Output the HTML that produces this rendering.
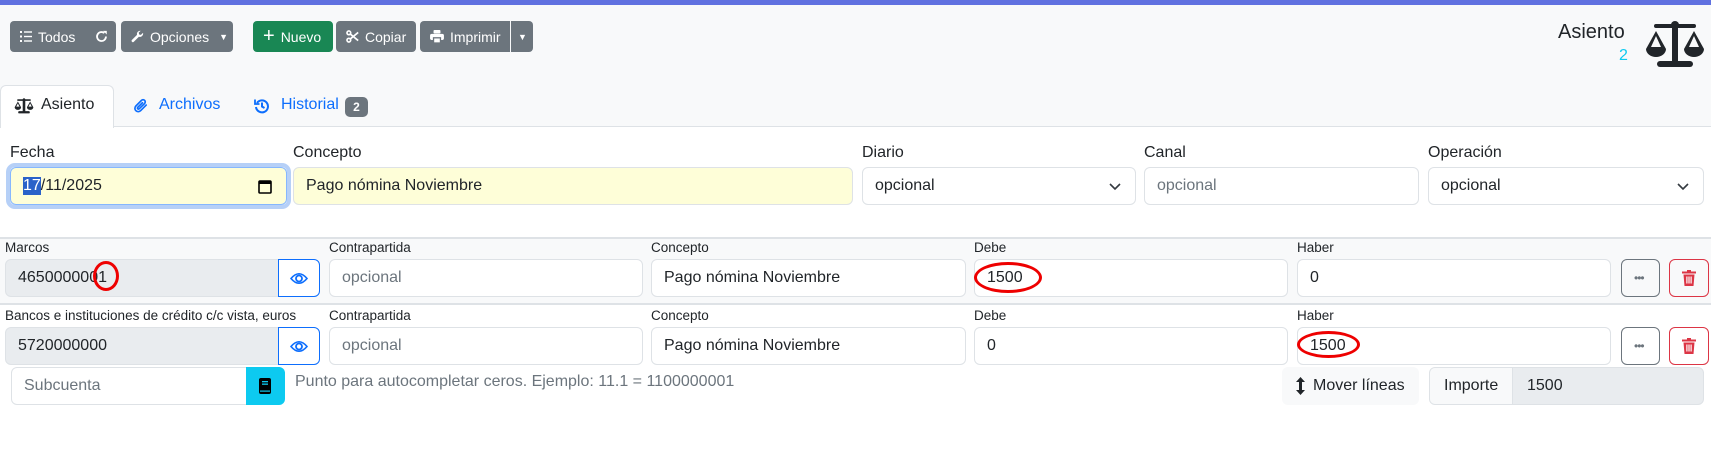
<!DOCTYPE html>
<html><head><meta charset="utf-8"><style>
*{box-sizing:border-box;margin:0;padding:0}
body{width:1711px;height:452px;overflow:hidden;background:#fff;font-family:"Liberation Sans",sans-serif;color:#212529;position:relative;font-size:16px}
.a{position:absolute}
.btn{position:absolute;top:21px;height:31px;border-radius:4px;background:#6c757d;color:#fff;font-size:14px;display:flex;align-items:center;padding-left:10px;gap:6px}
.inp{position:absolute;height:38px;border:1px solid #dee2e6;border-radius:6px;background:#fff;display:flex;align-items:center;padding-left:12px;font-size:16px}
.ph{color:#6c757d}
.lbl{position:absolute;font-size:16px}
.sl{position:absolute;font-size:13.5px}
.chev{position:absolute;right:14px;top:13px}
.ell{position:absolute;border:3px solid #e00;border-radius:50%}
</style></head><body>
<div class="a" style="left:0;top:0;width:1711px;height:127px;background:#f8f9fa"></div>
<div class="a" style="left:0;top:0;width:1711px;height:5px;background:#6071e0"></div>

<div class="btn" style="left:10px;width:106px"><svg width="12" height="11" viewBox="0 0 12 11" fill="#fff"><rect x="0" y="0" width="2" height="2"/><rect x="0" y="4.5" width="2" height="2"/><rect x="0" y="9" width="2" height="2"/><rect x="4" y="0.3" width="8" height="1.4"/><rect x="4" y="4.8" width="8" height="1.4"/><rect x="4" y="9.3" width="8" height="1.4"/></svg>Todos<svg style="margin-left:14px" width="13" height="13" viewBox="0 0 16 16" fill="none" stroke="#fff" stroke-width="2.2"><path d="M13.5 8A5.5 5.5 0 1 1 11.5 3.8"/><path d="M10 1 L14.5 1 L14.5 5.5 Z" fill="#fff" stroke="none"/></svg></div>
<div class="btn" style="left:121px;width:112px"><svg width="13" height="13" viewBox="0 0 16 16" fill="#fff"><path d="M15 4.5a4 4 0 0 1-5.3 3.8L3.5 14.5a1.6 1.6 0 0 1-2.3-2.3l6.2-6.2A4 4 0 0 1 11.8 1l-2.3 2.3.5 2.2 2.2.5L14.5 3.7c.3.2.5.5.5.8z"/></svg>Opciones<span style="font-size:9px;margin-left:4px">▼</span></div>
<div class="btn" style="left:253px;width:80px;background:#198754"><span style="font-size:20px;line-height:1;margin-top:-2px">+</span>Nuevo</div>
<div class="btn" style="left:336px;width:80px"><svg width="13" height="13" viewBox="0 0 16 16" fill="none" stroke="#fff" stroke-width="2"><circle cx="3.5" cy="3.5" r="2.3"/><circle cx="3.5" cy="12.5" r="2.3"/><path d="M5.3 5 L15 13 M5.3 11 L15 3"/></svg>Copiar</div>
<div class="btn" style="left:420px;width:90px;border-radius:4px 0 0 4px"><svg width="14" height="13" viewBox="0 0 16 15" fill="#fff"><rect x="4" y="0" width="8" height="4" rx="1"/><rect x="0" y="4.5" width="16" height="7" rx="2"/><rect x="4" y="9" width="8" height="6" fill="#fff" stroke="#6c757d" stroke-width="1.5"/></svg>Imprimir</div>
<div class="btn" style="left:511px;width:22px;border-radius:0 4px 4px 0;padding-left:7px;font-size:9px">▼</div>

<div class="a" style="left:1558px;top:21px;font-size:20px">Asiento</div>
<div class="a" style="left:1619px;top:47px;font-size:16px;color:#0dcaf0">2</div>
<svg class="a" style="left:1644px;top:21px" width="62" height="48" viewBox="0 0 62 48" fill="#212529"><circle cx="31" cy="4" r="4"/><rect x="10" y="3" width="42" height="4" rx="2"/><rect x="28" y="5" width="6" height="36"/><rect x="13" y="40" width="36" height="6" rx="3"/><path d="M12 10 L2 28 a10 8 0 0 0 20 0 Z M12 15 L7 26 H17 Z" fill-rule="evenodd"/><path d="M50 10 L40 28 a10 8 0 0 0 20 0 Z M50 15 L45 26 H55 Z" fill-rule="evenodd"/></svg>

<div class="a" style="left:0;top:126px;width:1711px;height:1px;background:#dee2e6"></div>
<div class="a" style="left:0;top:85px;width:114px;height:43px;background:#fff;border:1px solid #dee2e6;border-bottom:none;border-radius:6px 6px 0 0"></div>
<svg class="a" style="left:14px;top:98px" width="20" height="16" viewBox="0 0 62 48" fill="#212529"><circle cx="31" cy="4" r="4"/><rect x="10" y="3" width="42" height="5" rx="2"/><rect x="27" y="5" width="8" height="36"/><rect x="13" y="40" width="36" height="7" rx="3"/><path d="M12 10 L2 28 a10 8 0 0 0 20 0 Z M12 16 L7 26 H17 Z" fill-rule="evenodd"/><path d="M50 10 L40 28 a10 8 0 0 0 20 0 Z M50 16 L45 26 H55 Z" fill-rule="evenodd"/></svg>
<div class="a" style="left:41px;top:96px">Asiento</div>
<svg class="a" style="left:134px;top:98px" width="15" height="16" viewBox="0 0 16 16" fill="none" stroke="#0d6efd" stroke-width="1.8" stroke-linecap="round"><path d="M13 7 L7 13 a3.5 3.5 0 0 1-5-5 L8 2 a2.3 2.3 0 0 1 3.3 3.3 L5.5 11 a1 1 0 0 1-1.5-1.5 L9 4.5"/></svg>
<div class="a" style="left:159px;top:96px;color:#0d6efd">Archivos</div>
<svg class="a" style="left:254px;top:98px" width="16" height="16" viewBox="0 0 16 16" fill="none" stroke="#0d6efd" stroke-width="2"><path d="M3 5 A6 6 0 1 1 2 9"/><path d="M1 1.5 V6 H5.5" stroke-width="1.8"/><path d="M8 4.5 V8.5 L10.5 10"/></svg>
<div class="a" style="left:281px;top:96px;color:#0d6efd">Historial</div>
<div class="a" style="left:345px;top:97px;width:23px;height:20px;background:#6c757d;border-radius:5px;color:#fff;font-size:12px;font-weight:bold;text-align:center;line-height:20px">2</div>

<div class="lbl" style="left:10px;top:144px">Fecha</div>
<div class="lbl" style="left:293px;top:144px">Concepto</div>
<div class="lbl" style="left:862px;top:144px">Diario</div>
<div class="lbl" style="left:1144px;top:144px">Canal</div>
<div class="lbl" style="left:1428px;top:144px">Operación</div>

<div class="inp" style="left:6px;top:163px;width:285px;height:46px;border:4px solid #b6d0f7;border-radius:9px;background:transparent"></div>
<div class="inp" style="left:10px;top:167px;width:277px;background:#fefed8;border-color:#86b7fe;padding-left:12px"><span style="background:#2a62c9;color:#fff">17</span>/11/2025<svg style="position:absolute;right:14px;top:11px" width="14" height="15" viewBox="0 0 14 15"><rect x="1" y="2" width="12" height="12" fill="none" stroke="#000" stroke-width="1.6" rx="1"/><rect x="1" y="2" width="12" height="3" fill="#000"/></svg></div>
<div class="inp" style="left:293px;top:167px;width:560px;background:#fefed8">Pago nómina Noviembre</div>
<div class="inp" style="left:862px;top:167px;width:274px">opcional<svg class="chev" width="12" height="10" viewBox="0 0 12 10"><path d="M1 3 L6 8 L11 3" fill="none" stroke="#343a40" stroke-width="1.6"/></svg></div>
<div class="inp ph" style="left:1144px;top:167px;width:275px">opcional</div>
<div class="inp" style="left:1428px;top:167px;width:276px">opcional<svg class="chev" width="12" height="10" viewBox="0 0 12 10"><path d="M1 3 L6 8 L11 3" fill="none" stroke="#343a40" stroke-width="1.6"/></svg></div>

<div class="a" style="left:0;top:237px;width:1711px;height:68px;background:#f8f9fa;border-top:2px solid #dee2e6;border-bottom:2px solid #dee2e6"></div>

<div class="sl" style="left:5px;top:240px">Marcos</div>
<div class="sl" style="left:329px;top:240px">Contrapartida</div>
<div class="sl" style="left:651px;top:240px">Concepto</div>
<div class="sl" style="left:974px;top:240px">Debe</div>
<div class="sl" style="left:1297px;top:240px">Haber</div>
<div class="inp" style="left:5px;top:259px;width:274px;background:#e9ecef;border-radius:6px 0 0 6px">4650000001</div>
<div class="inp" style="left:278px;top:259px;width:42px;border-color:#0d6efd;border-radius:0 6px 6px 0;padding-left:11px"><svg width="18" height="13" viewBox="0 0 18 13"><path d="M1 6.5 Q9 -3 17 6.5 Q9 16 1 6.5Z" fill="none" stroke="#0d6efd" stroke-width="1.6"/><circle cx="9" cy="6.5" r="3" fill="none" stroke="#0d6efd" stroke-width="1.8"/></svg></div>
<div class="inp ph" style="left:329px;top:259px;width:314px">opcional</div>
<div class="inp" style="left:651px;top:259px;width:315px">Pago nómina Noviembre</div>
<div class="inp" style="left:974px;top:259px;width:314px">1500</div>
<div class="inp" style="left:1297px;top:259px;width:314px">0</div>
<div class="inp" style="left:1621px;top:259px;width:39px;border-color:#6c757d;background:transparent;padding-left:12px;color:#6c757d;font-size:12px;letter-spacing:-1px">•••</div>
<div class="inp" style="left:1669px;top:259px;width:40px;border-color:#dc3545;background:transparent;padding-left:12px"><svg width="14" height="16" viewBox="0 0 14 16" fill="#dc3545"><rect x="0" y="1.5" width="14" height="2"/><rect x="5" y="0" width="4" height="2"/><path d="M1.5 4.5 H12.5 L11.5 16 H2.5Z"/><rect x="4.3" y="6.5" width="1.2" height="7" fill="#fff"/><rect x="6.4" y="6.5" width="1.2" height="7" fill="#fff"/><rect x="8.5" y="6.5" width="1.2" height="7" fill="#fff"/></svg></div>

<div class="sl" style="left:5px;top:308px">Bancos e instituciones de crédito c/c vista, euros</div>
<div class="sl" style="left:329px;top:308px">Contrapartida</div>
<div class="sl" style="left:651px;top:308px">Concepto</div>
<div class="sl" style="left:974px;top:308px">Debe</div>
<div class="sl" style="left:1297px;top:308px">Haber</div>
<div class="inp" style="left:5px;top:327px;width:274px;background:#e9ecef;border-radius:6px 0 0 6px">5720000000</div>
<div class="inp" style="left:278px;top:327px;width:42px;border-color:#0d6efd;border-radius:0 6px 6px 0;padding-left:11px"><svg width="18" height="13" viewBox="0 0 18 13"><path d="M1 6.5 Q9 -3 17 6.5 Q9 16 1 6.5Z" fill="none" stroke="#0d6efd" stroke-width="1.6"/><circle cx="9" cy="6.5" r="3" fill="none" stroke="#0d6efd" stroke-width="1.8"/></svg></div>
<div class="inp ph" style="left:329px;top:327px;width:314px">opcional</div>
<div class="inp" style="left:651px;top:327px;width:315px">Pago nómina Noviembre</div>
<div class="inp" style="left:974px;top:327px;width:314px">0</div>
<div class="inp" style="left:1297px;top:327px;width:314px">1500</div>
<div class="inp" style="left:1621px;top:327px;width:39px;border-color:#6c757d;background:transparent;padding-left:12px;color:#6c757d;font-size:12px;letter-spacing:-1px">•••</div>
<div class="inp" style="left:1669px;top:327px;width:40px;border-color:#dc3545;background:transparent;padding-left:12px"><svg width="14" height="16" viewBox="0 0 14 16" fill="#dc3545"><rect x="0" y="1.5" width="14" height="2"/><rect x="5" y="0" width="4" height="2"/><path d="M1.5 4.5 H12.5 L11.5 16 H2.5Z"/><rect x="4.3" y="6.5" width="1.2" height="7" fill="#fff"/><rect x="6.4" y="6.5" width="1.2" height="7" fill="#fff"/><rect x="8.5" y="6.5" width="1.2" height="7" fill="#fff"/></svg></div>

<div class="ell" style="left:93px;top:261px;width:26px;height:30px"></div>
<div class="ell" style="left:974px;top:262px;width:68px;height:31px"></div>
<div class="ell" style="left:1297px;top:331px;width:63px;height:27px"></div>

<div class="inp ph" style="left:11px;top:367px;width:240px;border-radius:6px 0 0 6px">Subcuenta</div>
<div class="a" style="left:246px;top:367px;width:39px;height:38px;background:#0dcaf0;border-radius:0 6px 6px 0"><svg style="position:absolute;left:13px;top:11px" width="12" height="16" viewBox="0 0 12 16"><rect x="0" y="0" width="12" height="16" rx="2" fill="#000"/><rect x="3" y="3" width="6" height="1.3" fill="#0dcaf0"/><rect x="3" y="5.5" width="6" height="1.3" fill="#0dcaf0"/><rect x="1" y="12.5" width="10" height="1.2" fill="#0dcaf0"/></svg></div>
<div class="a" style="left:295px;top:373px;color:#6c757d">Punto para autocompletar ceros. Ejemplo: 11.1 = 1100000001</div>
<div class="a" style="left:1282px;top:367px;width:137px;height:38px;background:#f8f9fa;border-radius:6px;display:flex;align-items:center;padding-left:14px;gap:8px"><svg width="9" height="18" viewBox="0 0 9 18" fill="#212529"><path d="M4.5 0 L9 5 H6 V13 H9 L4.5 18 L0 13 H3 V5 H0Z"/></svg>Mover líneas</div>
<div class="a" style="left:1429px;top:367px;width:275px;height:38px;border:1px solid #dee2e6;border-radius:6px;background:#e9ecef;overflow:hidden"><div style="position:absolute;left:0;top:0;width:83px;height:36px;background:#f8f9fa;border-right:1px solid #dee2e6;padding:9px 0 0 14px">Importe</div><div style="position:absolute;left:97px;top:9px">1500</div></div>
</body></html>
